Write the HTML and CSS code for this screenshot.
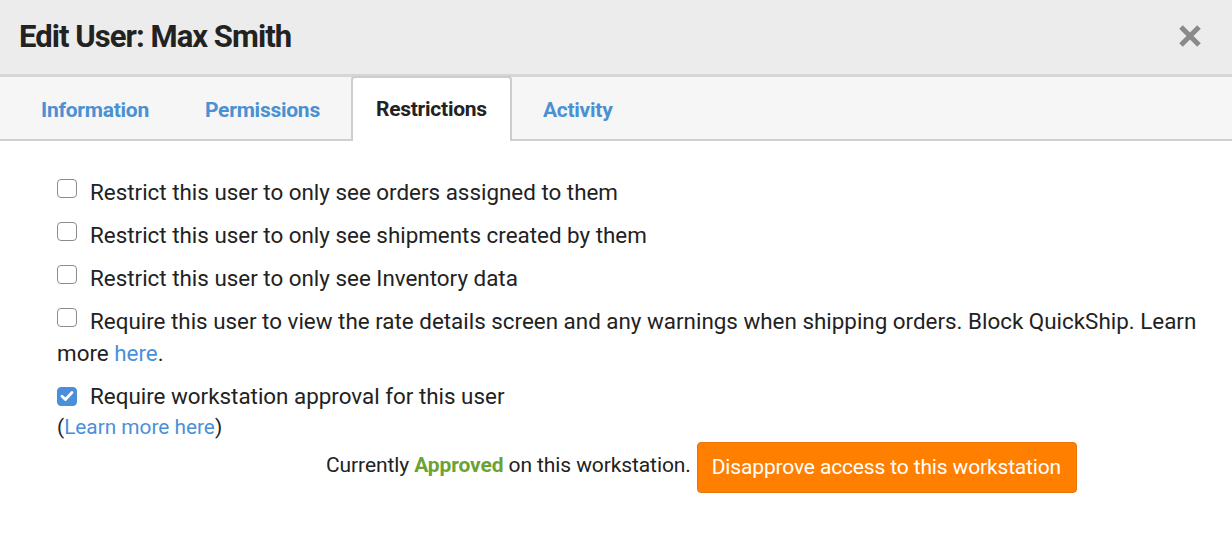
FILE: index.html
```html
<!DOCTYPE html>
<html>
<head>
<meta charset="utf-8">
<link rel="stylesheet" href="styles.css">
</head>
<body>
<div class="modal">
  <header class="modal-header">
    <h1 class="modal-title">Edit User: Max Smith</h1>
    <button class="close-btn" aria-label="Close">
      <svg width="24" height="24" viewBox="0 0 24 24"><path d="M3 3 L21 21 M21 3 L3 21" stroke="#8a8a8a" stroke-width="5" stroke-linecap="butt"/></svg>
    </button>
  </header>
  <nav class="tabs">
    <a class="tab">Information</a>
    <a class="tab">Permissions</a>
    <a class="tab active">Restrictions</a>
    <a class="tab">Activity</a>
  </nav>
  <section class="content">
    <p class="option"><span class="cb"></span>Restrict this user to only see orders assigned to them</p>
    <p class="option"><span class="cb"></span>Restrict this user to only see shipments created by them</p>
    <p class="option"><span class="cb"></span>Restrict this user to only see Inventory data</p>
    <p class="option"><span class="cb"></span>Require this user to view the rate details screen and any warnings when shipping orders. Block QuickShip. Learn more <a class="link">here</a>.</p>
    <p class="option tight"><span class="cb checked"><svg width="14" height="12" viewBox="0 0 14 12"><path d="M2 6.2 L5.4 9.4 L12 2.6" fill="none" stroke="#fff" stroke-width="2.8" stroke-linecap="round" stroke-linejoin="round"/></svg></span>Require workstation approval for this user</p>
    <p class="option sub">(<a class="link">Learn more here</a>)</p>
    <div class="status">
      <span class="status-text">Currently <b class="approved">Approved</b> on this workstation.</span>
      <button class="btn-orange">Disapprove access to this workstation</button>
    </div>
  </section>
</div>
</body>
</html>
```
FILE: styles.css
```css
* { box-sizing: border-box; }
html, body { margin: 0; padding: 0; background: #fff; }
body { font-family: Roboto, "Liberation Sans", sans-serif; color: #222; }

.modal { width: 1232px; height: 554px; background: #fff; }

.modal-header {
  height: 77px;
  background: #ececec;
  border-bottom: 3px solid #d6d6d6;
  display: flex;
  align-items: center;
  justify-content: space-between;
  padding: 0 30px 0 19px;
}
.modal-title {
  margin: 0;
  font-size: 31px;
  font-weight: 700;
  letter-spacing: -0.95px;
  color: #222;
  padding-bottom: 2px;
}
.close-btn {
  border: 0;
  background: none;
  padding: 0;
  width: 24px;
  height: 24px;
  display: flex;
  margin-bottom: 3px;
}

.tabs {
  height: 64px;
  background: #f6f6f6;
  border-bottom: 2px solid #cfcfcf;
  display: flex;
  align-items: flex-end;
  padding-left: 16px;
  gap: 6px;
}
.tab {
  height: 64px;
  margin-bottom: -2px;
  padding: 0 23px 1px;
  display: flex;
  align-items: center;
  font-size: 21px;
  font-weight: 700;
  letter-spacing: -0.25px;
  color: #4a90d2;
  border: 2px solid transparent;
  border-bottom: 0;
  border-radius: 4px 4px 0 0;
}
.tab.active {
  background: #fff;
  color: #222;
  border-color: #cdcdcd;
  height: 65px;
}

.content { padding: 35px 32px 0 57px; }
.option {
  margin: 0 0 11px;
  font-size: 22.4px;
  line-height: 32px;
  color: #222;
}
.option.tight { margin-bottom: 0; }
.option.sub { margin-bottom: 0; line-height: 30px; font-size: 20.8px; }
.cb {
  display: inline-flex;
  align-items: center;
  justify-content: center;
  width: 20px;
  height: 19px;
  border: 1.5px solid #8c8c8c;
  border-radius: 4px;
  background: #fff;
  vertical-align: -1px;
  margin-right: 13px;
  position: relative;
  top: -3px;
}
.cb.checked {
  background: #4a8fd8;
  border-color: #4a8fd8;
}
.link { color: #4a90d9; text-decoration: none; }

.status {
  display: flex;
  align-items: center;
  padding-left: 269px;
  margin-top: 0;
  gap: 6px;
}
.status-text {
  font-size: 21px;
  letter-spacing: -0.1px;
  color: #222;
  padding-bottom: 5px;
}
.approved { color: #6ca234; font-weight: 700; }
.btn-orange {
  height: 51px;
  padding: 0 15px 2px 14px;
  background: #ff8000;
  border: 1px solid #e6760a;
  border-radius: 4px;
  color: #fff;
  font-family: Roboto, "Liberation Sans", sans-serif;
  font-size: 21px;
  letter-spacing: -0.15px;
}
```
